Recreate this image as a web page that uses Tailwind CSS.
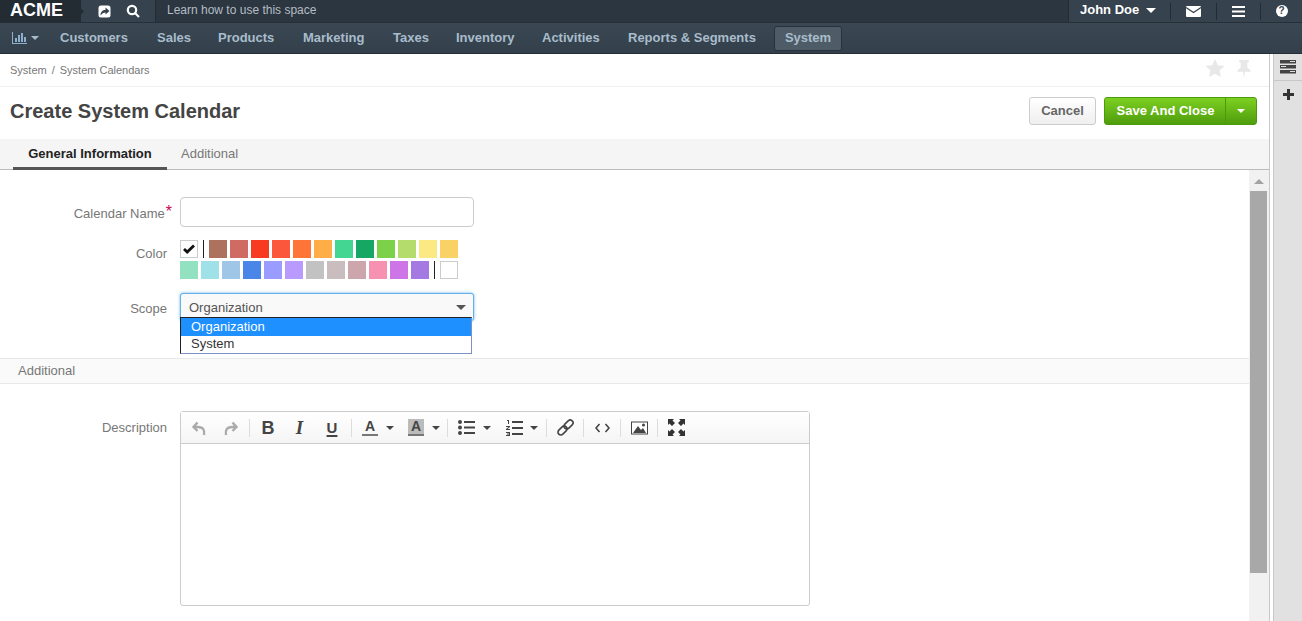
<!DOCTYPE html>
<html><head><meta charset="utf-8">
<script src="https://cdn.jsdelivr.net/npm/@tailwindcss/browser@4"></script>
<title>Create System Calendar</title></head>
<body class="w-[1302px] h-[621px] overflow-hidden bg-white font-['Liberation_Sans',Arial,sans-serif] text-[#444]">
<header class="h-[23px] flex bg-[#2c3640] text-white border-b border-[#262e36]">
  <div class="relative w-[81px] bg-[#232b33] pl-[10px] text-[18px] leading-[21px] font-bold">ACME
    <svg class="absolute left-[72px] top-0" width="12" height="23"><path d="M0 0L12 11.5L0 23Z" fill="#232b33"/></svg>
  </div>
  <div class="w-[75px] flex items-center pl-[17px] gap-[15px] bg-[#36424e] border-r border-[#232b33]">
    <svg width="13" height="13" viewBox="0 0 13 13"><rect x=".5" y=".5" width="12" height="12" rx="2.5" fill="#fff"/><path d="M2.500 10.500C2.500 7 4.500 5 7.500 5V2.500L11.500 6L7.500 9.500V7.500C5.500 7.500 4 8.500 2.500 10.500Z" fill="#36424e"/></svg>
    <svg width="14" height="14" viewBox="0 0 14 14" fill="none" stroke="#fff" stroke-width="2.2"><circle cx="6" cy="6" r="4.2"/><path d="M9 9L13 13"/></svg>
  </div>
  <div class="flex-1 pl-[11px] text-[12px] leading-[21px] text-[#b4bcc4]">Learn how to use this space</div>
  <div class="flex h-full bg-[#36424e] border-l border-[#232b33] items-center">
    <div class="w-[101px] pl-[11px] pb-[2px] flex items-center gap-[7px] text-[13px] font-bold leading-[20px]">John Doe<span class="w-0 h-0 border-x-[5px] border-x-transparent border-t-[5px] border-t-white mt-[1px]"></span></div>
    <div class="w-[46px] h-[17px] border-l border-[#232b33] flex items-center justify-center">
      <svg width="15" height="11" viewBox="0 0 15 11"><rect width="15" height="11" rx="1" fill="#fff"/><path d="M0 1.500L7.500 6.500L15 1.500" fill="none" stroke="#36424e" stroke-width="1.2"/></svg></div>
    <div class="w-[44px] h-[17px] border-l border-[#232b33] flex items-center justify-center">
      <svg width="13" height="11" viewBox="0 0 13 11" fill="#fff"><rect width="13" height="2"/><rect y="4.500" width="13" height="2"/><rect y="9" width="13" height="2"/></svg></div>
    <div class="w-[42px] h-[17px] border-l border-[#232b33] flex items-center justify-center">
      <span class="w-[12px] h-[12px] rounded-full bg-white text-[#36424e] text-[10px] leading-[12px] font-bold text-center">?</span></div>
  </div>
</header>
<nav class="h-[31px] flex items-center bg-[#36434f] bg-gradient-to-b from-[#3a4854] to-[#33404b] border-b border-[#252d35] text-[13px] font-bold text-[#a9bccb]">
  <div class="w-[60px] pl-[12px] flex items-center gap-[4px]">
    <svg width="15" height="12" viewBox="0 0 15 12" fill="#8fb0cc"><path d="M0 0h1v11h14v1H0z"/><rect x="3" y="6" width="2" height="4"/><rect x="6" y="3" width="2" height="7"/><rect x="9" y="1" width="2" height="9"/><rect x="12" y="5" width="2" height="5"/></svg>
    <span class="w-0 h-0 border-x-[4px] border-x-transparent border-t-[4px] border-t-[#a9bccb]"></span>
  </div>
  <div class="flex items-center">
    <span class="w-[97px]">Customers</span><span class="w-[61px]">Sales</span><span class="w-[85px]">Products</span><span class="w-[90px]">Marketing</span><span class="w-[63px]">Taxes</span><span class="w-[86px]">Inventory</span><span class="w-[86px]">Activities</span><span class="w-[146px]">Reports &amp; Segments</span>
    <span class="w-[68px] h-[25px] leading-[21px] text-center rounded-[3px] bg-[#4e5c68] border border-[#29323a]">System</span>
  </div>
</nav>
<div class="flex h-[567px]">
  <main class="w-[1270px] flex flex-col border-r border-[#c8c8c8]">
    <div class="h-[33px] flex items-center justify-between border-b border-[#f0f0f0] pl-[10px] pr-[18px] text-[11px] text-[#777]">
      <span class="mt-[1px] flex gap-[5px]"><span>System</span><span>/</span><span>System Calendars</span></span>
      <div class="flex items-start gap-[12px] -mt-[3px]">
        <svg width="20" height="18" viewBox="0 0 20 19" fill="#e8e8e8"><path d="M10 0L13 6.500L20 7.300L14.800 12L16.200 19L10 15.500L3.800 19L5.200 12L0 7.300L7 6.500Z"/></svg>
        <svg class="mt-[1px]" width="14" height="18" viewBox="0 0 14 19" fill="#e8e8e8"><path d="M2 0H12V2L10.500 3V8L14 11V12.500H8L7 19L6 12.500H0V11L3.500 8V3L2 2Z"/></svg>
      </div>
    </div>
    <div class="h-[52px] flex items-center justify-between pl-[10px] pr-[12px] pb-[4px]">
      <h1 class="text-[20px] font-bold text-[#444]">Create System Calendar</h1>
      <div class="flex items-center gap-[8px]">
        <button class="w-[67px] h-[28px] rounded-[3px] border border-[#ccc] bg-gradient-to-b from-white to-[#efefef] text-[13px] font-bold text-[#666]">Cancel</button>
        <div class="flex h-[28px] rounded-[3px] border border-[#4b9a0c] bg-gradient-to-b from-[#7dd021] to-[#4f9d0c] text-white">
          <span class="w-[121px] pl-[1px] text-center text-[13px] font-bold leading-[25px] border-r border-[#4b9a0c]">Save And Close</span>
          <span class="w-[30px] flex items-center justify-center"><span class="w-0 h-0 border-x-[4px] border-x-transparent border-t-[4px] border-t-white"></span></span>
        </div>
      </div>
    </div>
    <div class="h-[31px] flex bg-[#f5f5f5] border-b border-[#bbb] pl-[13px] text-[13px]">
      <span class="w-[154px] text-center font-bold leading-[29px] -mb-[1px] h-[31px] border-b-[3px] border-[#555] text-[#222]">General Information</span>
      <span class="pl-[14px] leading-[29px] text-[#777]">Additional</span>
    </div>
    <div class="relative flex-1 flex min-h-0">
      <div class="flex-1 min-w-0 overflow-hidden">
        <div class="h-[27px]"></div>
        <div class="flex items-center h-[30px]">
          <label class="w-[172px] text-right text-[13px] text-[#777] pt-[3px]">Calendar Name<span class="ml-[1px] text-[#c9084f] text-[16px] leading-[10px] align-[1px]">*</span></label>
          <div class="ml-[8px] w-[294px] h-[30px] rounded-[4px] border border-[#ccc]"></div>
        </div>
        <div class="flex mt-[13px] h-[40px]">
          <label class="w-[167px] text-right text-[13px] text-[#777] mt-[4px]">Color</label>
          <div class="ml-[13px] w-[280px] flex flex-col gap-[3px]">
            <div class="flex h-[18px] gap-[3px]">
              <span class="w-[18px] h-[18px] border border-[#ccc] bg-white flex items-center justify-center"><svg width="12" height="10" viewBox="0 0 12 10"><path d="M1 5L4.200 8L11 1.500" fill="none" stroke="#111" stroke-width="2.800"/></svg></span>
              <span class="w-[1px] h-[18px] bg-[#222] ml-[2px] mr-[2px]"></span>
              <span class="w-[18px] bg-[#ac725e]"></span><span class="w-[18px] bg-[#d06b64]"></span><span class="w-[18px] bg-[#f83a22]"></span><span class="w-[18px] bg-[#fa573c]"></span><span class="w-[18px] bg-[#ff7537]"></span><span class="w-[18px] bg-[#ffad46]"></span><span class="w-[18px] bg-[#42d692]"></span><span class="w-[18px] bg-[#16a765]"></span><span class="w-[18px] bg-[#7bd148]"></span><span class="w-[18px] bg-[#b3dc6c]"></span><span class="w-[18px] bg-[#fbe983]"></span><span class="w-[18px] bg-[#fad165]"></span>
            </div>
            <div class="flex h-[18px] gap-[3px]">
              <span class="w-[18px] bg-[#92e1c0]"></span><span class="w-[18px] bg-[#9fe1e7]"></span><span class="w-[18px] bg-[#9fc6e7]"></span><span class="w-[18px] bg-[#4986e7]"></span><span class="w-[18px] bg-[#9a9cff]"></span><span class="w-[18px] bg-[#b99aff]"></span><span class="w-[18px] bg-[#c2c2c2]"></span><span class="w-[18px] bg-[#cabdbf]"></span><span class="w-[18px] bg-[#cca6ac]"></span><span class="w-[18px] bg-[#f691b2]"></span><span class="w-[18px] bg-[#cd74e6]"></span><span class="w-[18px] bg-[#a47ae2]"></span>
              <span class="w-[1px] h-[18px] bg-[#222] ml-[2px] mr-[2px]"></span>
              <span class="w-[18px] h-[18px] border border-[#ccc] bg-white"></span>
            </div>
          </div>
        </div>
        <div class="relative flex items-center mt-[13px] h-[28px]">
          <label class="w-[167px] text-right text-[13px] text-[#777] pt-[4px]">Scope</label>
          <div class="ml-[13px] w-[294px] h-[28px] rounded-[3px] border border-[#66afe9] shadow-[0_0_3px_#66afe9] bg-[#f9f9f9] flex items-center justify-between pl-[8px] pr-[7px] pt-[1px] text-[13px] text-[#555]">Organization<span class="w-0 h-0 border-x-[5px] border-x-transparent border-t-[5px] border-t-[#555]"></span></div>
          <div class="absolute left-[180px] top-[24px] w-[292px] h-[37px] bg-white border border-[#222] border-b-[#7a93c4] border-r-[#7a93c4] text-[13px] text-[#333]">
            <div class="h-[18px] leading-[17px] bg-[#1e90ff] text-white pl-[10px]">Organization</div>
            <div class="pl-[10px] leading-[15px]">System</div>
          </div>
        </div>
        <div class="mt-[37px] h-[26px] border-y border-[#e8e8e8] bg-[#fafafa] pl-[18px] text-[13px] leading-[23px] text-[#777]">Additional</div>
        <div class="flex mt-[27px]">
          <label class="w-[167px] text-right text-[13px] text-[#777] mt-[7px]">Description</label>
          <div class="ml-[13px] w-[630px] h-[195px] rounded-[3px] border border-[#ccc] bg-white">
            <div class="h-[32px] flex items-center border-b border-[#ccc] bg-gradient-to-b from-white to-[#f5f5f5] text-[#444]">
              <svg class="ml-[10px]" width="16" height="16" viewBox="0 0 16 16" fill="none" stroke="#aaa" stroke-width="2.4"><path d="M13 15C14 10 12 7 7 7H3M6.500 2.500L2.500 7L6.500 11"/></svg>
              <svg class="ml-[16px]" width="16" height="16" viewBox="0 0 16 16" fill="none" stroke="#aaa" stroke-width="2.4"><path d="M3 15C2 10 4 7 9 7H13M9.500 2.500L13.500 7L9.500 11"/></svg>
              <span class="w-[1px] h-[18px] bg-[#ddd] ml-[10px]"></span>
              <span class="w-[36px] text-center text-[18px] font-bold leading-[20px] text-[#444]">B</span>
              <span class="w-[27px] text-center text-[19px] font-bold italic leading-[20px] font-['Liberation_Serif',serif] text-[#444]">I</span>
              <span class="w-[38px] text-center text-[15px] font-bold underline decoration-2 underline-offset-2 leading-[20px] text-[#444]">U</span>
              <span class="w-[1px] h-[18px] bg-[#ddd]"></span>
              <span class="ml-[10px] w-[16px] text-center text-[14px] font-bold leading-[15px] border-b-2 border-[#777]">A</span>
              <span class="ml-[8px] w-0 h-0 border-x-[4px] border-x-transparent border-t-[4px] border-t-[#444]"></span>
              <span class="ml-[14px] w-[16px] text-center text-[14px] font-bold leading-[15px] bg-[#bbb] border-b-2 border-[#777]">A</span>
              <span class="ml-[8px] w-0 h-0 border-x-[4px] border-x-transparent border-t-[4px] border-t-[#444]"></span>
              <span class="w-[1px] h-[18px] bg-[#ddd] ml-[7px]"></span>
              <svg class="ml-[10px]" width="17" height="15" viewBox="0 0 17 15" fill="#444"><circle cx="2" cy="2" r="2"/><circle cx="2" cy="7.500" r="2"/><circle cx="2" cy="13" r="2"/><rect x="6" y="1" width="11" height="2"/><rect x="6" y="6.500" width="11" height="2"/><rect x="6" y="12" width="11" height="2"/></svg>
              <span class="ml-[8px] w-0 h-0 border-x-[4px] border-x-transparent border-t-[4px] border-t-[#444]"></span>
              <svg class="ml-[15px]" width="17" height="16" viewBox="0 0 17 16" fill="#444"><path d="M1 0H3V4H2V1H1ZM0 6H4V7L1.500 9H4V10H0V9L2.500 7H0ZM0 12H4V16H0V15H3V14.500H1V13.500H3V13H0Z"/><rect x="6" y="1" width="11" height="2"/><rect x="6" y="7" width="11" height="2"/><rect x="6" y="13" width="11" height="2"/></svg>
              <span class="ml-[7px] w-0 h-0 border-x-[4px] border-x-transparent border-t-[4px] border-t-[#444]"></span>
              <span class="w-[1px] h-[18px] bg-[#ddd] ml-[8px]"></span>
              <svg class="ml-[10px]" width="17" height="17" viewBox="0 0 18 18" fill="none" stroke="#444" stroke-width="1.700"><g transform="rotate(-45 9 9)"><rect x="-1" y="6" width="11" height="6" rx="3"/><rect x="8" y="6" width="11" height="6" rx="3"/></g></svg>
              <span class="w-[1px] h-[18px] bg-[#ddd] ml-[9px]"></span>
              <svg class="ml-[11px]" width="15" height="10" viewBox="0 0 15 10" fill="none" stroke="#444" stroke-width="1.600"><path d="M4.500 1L1 5L4.500 9M10.500 1L14 5L10.500 9"/></svg>
              <span class="w-[1px] h-[18px] bg-[#ddd] ml-[10px]"></span>
              <svg class="ml-[10px]" width="17" height="14" viewBox="0 0 17 14"><rect x=".5" y="1" width="16" height="12" fill="#fff" stroke="#444"/><path d="M2 12L7 5L10 9L12 7L15 12Z" fill="#444"/><circle cx="12.500" cy="4" r="1.500" fill="#444"/></svg>
              <span class="w-[1px] h-[18px] bg-[#ddd] ml-[9px]"></span>
              <svg class="ml-[10px]" width="17" height="17" viewBox="0 0 17 17" fill="#333"><path d="M0 0H6L4.500 1.500L7 4L4 7L1.500 4.500L0 6ZM17 0V6L15.500 4.500L13 7L10 4L12.500 1.500L11 0ZM0 17V11L1.500 12.500L4 10L7 13L4.500 15.500L6 17ZM17 17H11L12.500 15.500L10 13L13 10L15.500 12.500L17 11Z"/></svg>
            </div>
          </div>
        </div>
      </div>
      <div class="w-[20px] bg-[#f1f1f1] relative shrink-0">
        <span class="absolute left-[5px] top-[9px] w-0 h-0 border-x-[5px] border-x-transparent border-b-[5px] border-b-[#a3a3a3]"></span>
        <div class="absolute left-[1px] top-[21px] w-[17px] h-[382px] bg-[#a8a8a8]"></div>
      </div>
    </div>
  </main>
  <aside class="w-[29px] ml-[3px] bg-[#e1e1e1] border-l border-[#c8c8c8]">
    <div class="h-[27px] border-b border-[#c8c8c8] flex items-center justify-center">
      <svg width="16" height="14" viewBox="0 0 16 14" fill="#444"><rect width="16" height="3.500"/><rect y="5" width="16" height="3.500"/><rect y="10" width="16" height="3.500"/><rect x="10" y="1" width="5" height="1" fill="#ddd"/><rect x="1" y="6" width="5" height="1" fill="#ddd"/><rect x="10" y="11" width="5" height="1" fill="#ddd"/></svg>
    </div>
    <div class="flex justify-center pt-[8px]">
      <svg width="11" height="11" viewBox="0 0 11 11" fill="#333"><rect x="4" width="3" height="11"/><rect y="4" width="11" height="3"/></svg>
    </div>
  </aside>
</div>
</body></html>
